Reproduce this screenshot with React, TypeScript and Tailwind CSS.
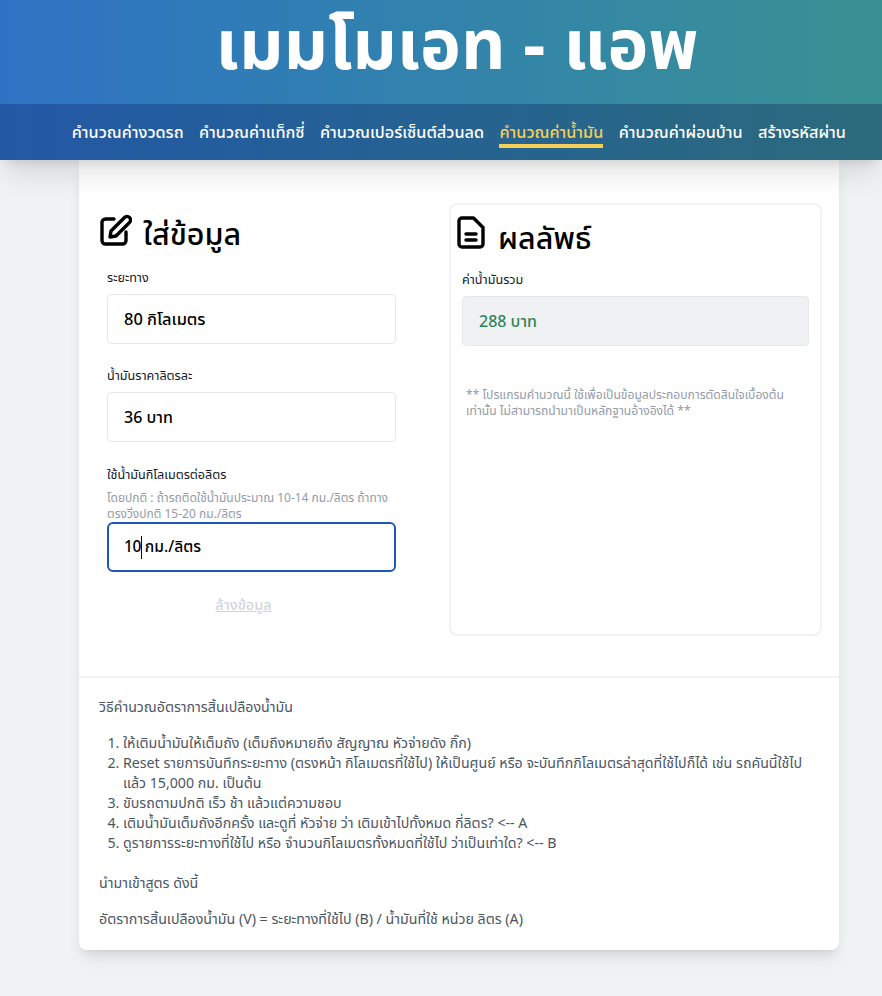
const navItems = [
  "คำนวณค่างวดรถ",
  "คำนวณค่าแท็กซี่",
  "คำนวณเปอร์เซ็นต์ส่วนลด",
  "คำนวณค่าน้ำมัน",
  "คำนวณค่าผ่อนบ้าน",
  "สร้างรหัสผ่าน",
];

const steps = [
  "ให้เติมน้ำมันให้เต็มถัง (เต็มถึงหมายถึง สัญญาณ หัวจ่ายดัง กิ๊ก)",
  "Reset รายการบันทึกระยะทาง (ตรงหน้า กิโลเมตรที่ใช้ไป) ให้เป็นศูนย์ หรือ จะบันทึกกิโลเมตรล่าสุดที่ใช้ไปก็ได้ เช่น รถคันนี้ใช้ไปแล้ว 15,000 กม. เป็นต้น",
  "ขับรถตามปกติ เร็ว ช้า แล้วแต่ความชอบ",
  "เติมน้ำมันเต็มถังอีกครั้ง และดูที่ หัวจ่าย ว่า เติมเข้าไปทั้งหมด กี่ลิตร? <-- A",
  "ดูรายการระยะทางที่ใช้ไป หรือ จำนวนกิโลเมตรทั้งหมดที่ใช้ไป ว่าเป็นเท่าใด? <-- B",
];

const EditIcon = () => (
  <svg viewBox="0 0 32 32" className="w-8 h-8 mt-[8px] shrink-0" fill="none" stroke="black" strokeWidth="3.4" strokeLinecap="round" strokeLinejoin="round">
    <path d="M14 5H5.500A3.500 3.500 0 0 0 2 8.500V26.500A3.500 3.500 0 0 0 5.500 30h17a3.500 3.500 0 0 0 3.500-3.500V18" />
    <path d="M24.500 3.500a3.500 3.500 0 0 1 5 5L16 22l-6 1 1-6z" />
  </svg>
);

const FileIcon = () => (
  <svg viewBox="0 0 28 33" className="w-[28px] h-[33px] mt-[7px] -ml-[5px] shrink-0" fill="none" stroke="black" strokeWidth="3.4" strokeLinecap="round" strokeLinejoin="round">
    <path d="M5 2h11.500L26 11.500V28a3 3 0 0 1-3 3H5a3 3 0 0 1-3-3V5a3 3 0 0 1 3-3z" />
    <path d="M9 18h10M9 24h10" />
  </svg>
);

export default function App() {
  return (
    <div className="min-h-[996px] bg-[#f1f2f4] font-['Noto_Sans','Noto_Sans_Thai','Liberation_Sans',sans-serif]">
      <header className="bg-gradient-to-r from-[#2f72c4] to-[#3a9192] shadow-xl relative">
        <h1 className="text-[69px] font-bold text-white leading-[84px] pb-[20px] pl-[32px] text-center">
          เมมโมเอท - แอพ
        </h1>
        <nav className="h-[56px] bg-gradient-to-r from-[#2358a6] to-[#2c6a7c] flex items-center justify-end gap-[15.4px] pr-[36px]">
          {navItems.map((item, i) => (
            <a
              key={item}
              className={
                i === 3
                  ? "text-[16.25px] font-medium text-[#f6cf57] border-b-4 border-[#f6cf57] leading-[24px] mt-[4px]"
                  : "text-[16.25px] font-medium text-white leading-[24px] border-b-4 border-transparent mt-[4px]"
              }
            >
              {item}
            </a>
          ))}
        </nav>
      </header>

      <main className="w-[760px] ml-[79px] h-[790px] bg-white rounded-b-lg shadow-lg">
        <div className="h-[516px] flex pt-[43px]">
          <section className="w-[370px] pl-[21px]">
            <h2 className="flex items-start gap-[11px] text-[30.5px] font-medium text-black leading-[54px] mt-[3px]">
              <EditIcon />
              <span>ใส่ข้อมูล</span>
            </h2>
            <div className="pl-[7px] w-[296px]">
              <label className="block text-[12.6px] text-[#111827] leading-[16px] mt-[10px]">ระยะทาง</label>
              <div className="h-[50px] mt-[8px] border border-[#e5e7eb] rounded flex items-center px-4 text-[16.4px] font-medium text-black">
                80 กิโลเมตร
              </div>
              <label className="block text-[12.6px] text-[#111827] leading-[16px] mt-[24px]">น้ำมันราคาลิตรละ</label>
              <div className="h-[50px] mt-[8px] border border-[#e5e7eb] rounded flex items-center px-4 text-[16px] font-medium text-black">
                36 บาท
              </div>
              <label className="block text-[12.6px] text-[#111827] leading-[16px] mt-[25px]">ใช้น้ำมันกิโลเมตรต่อลิตร</label>
              <p className="text-[12px] text-[#949ba8] leading-[16px] mt-[7px]">
                โดยปกติ : ถ้ารถติดใช้น้ำมันประมาณ 10-14 กม./ลิตร ถ้าทาง ตรงวิ่งปกติ 15-20 กม./ลิตร
              </p>
              <div className="h-[50px] border-2 border-[#1d58b8] rounded-md flex items-center px-[15px] text-[15.6px] font-medium text-black">
                <span className="tracking-[-0.5px]">10</span>
                <span className="inline-block w-px h-[23px] bg-black" />
                <span className="ml-[3px]">กม./ลิตร</span>
              </div>
              <div className="text-center mt-[22px] pr-[16px] text-[14.5px] font-medium text-[#d1d5db] underline leading-[20px]">ล้างข้อมูล</div>
            </div>
          </section>

          <section className="w-[373px] h-[433px] border-2 border-[#f1f2f4] rounded-lg px-[11px]">
            <h2 className="flex items-start gap-[13px] text-[30.5px] font-medium text-black leading-[56px] mt-[4px]">
              <FileIcon />
              <span>ผลลัพธ์</span>
            </h2>
            <label className="block text-[12.6px] text-[#111827] leading-[16px] mt-[7px]">ค่าน้ำมันรวม</label>
            <div className="h-[50px] mt-[8px] bg-[#f0f1f3] border border-[#e5e7eb] rounded flex items-center px-4 text-[16px] font-medium text-[#2f855a]">
              288 บาท
            </div>
            <p className="text-[12.1px] text-[#949ba8] leading-[16px] mt-[41px] px-[4px]">
              ** โปรแกรมคำนวณนี้ ใช้เพื่อเป็นข้อมูลประกอบการตัดสินใจเบื้องต้น เท่านั้น ไม่สามารถนำมาเป็นหลักฐานอ้างอิงได้ **
            </p>
          </section>
        </div>

        <div className="border-t-2 border-[#f1f2f4] px-[20px] pt-[19px] text-[14.2px] text-[#4b5563] leading-[20px]">
          <p>วิธีคำนวณอัตราการสิ้นเปลืองน้ำมัน</p>
          <ol className="list-decimal ml-[24px] mt-[16px]">
            {steps.map((s) => (
              <li key={s}>{s}</li>
            ))}
          </ol>
          <p className="mt-[20px]">นำมาเข้าสูตร ดังนี้</p>
          <p className="mt-[16px]">อัตราการสิ้นเปลืองน้ำมัน (V) = ระยะทางที่ใช้ไป (B) / น้ำมันที่ใช้ หน่วย ลิตร (A)</p>
        </div>
      </main>
    </div>
  );
}
